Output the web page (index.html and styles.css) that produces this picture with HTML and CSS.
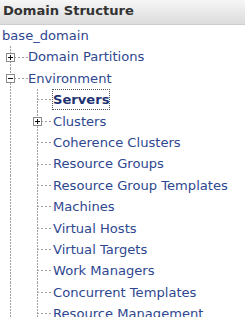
FILE: index.html
```html
<!DOCTYPE html>
<html>
<head>
<meta charset="utf-8">
<link rel="stylesheet" href="styles.css">
</head>
<body>
<div class="panel">
  <div class="header">Domain Structure</div>
  <div class="tree">
    <div class="row root"><a class="link">base_domain</a></div>
    <div class="row">
      <span class="cell c1 tee"><svg class="box" width="9" height="9" viewBox="0 0 9 9"><rect x="0.5" y="0.5" width="8" height="8" fill="#fff" stroke="#8a8a8a"/><path d="M2 4.5H7M4.5 2V7" stroke="#111" stroke-width="1"/></svg></span>
      <a class="link">Domain Partitions</a>
    </div>
    <div class="row">
      <span class="cell c1 tee"><svg class="box" width="9" height="9" viewBox="0 0 9 9"><rect x="0.5" y="0.5" width="8" height="8" fill="#fff" stroke="#8a8a8a"/><path d="M2 4.5H7" stroke="#111" stroke-width="1"/></svg></span>
      <a class="link">Environment</a>
    </div>
    <div class="row">
      <span class="cell c1 line"></span><span class="cell c2 tee"></span>
      <a class="link focus">Servers</a>
    </div>
    <div class="row">
      <span class="cell c1 line"></span><span class="cell c2 tee"><svg class="box" width="9" height="9" viewBox="0 0 9 9"><rect x="0.5" y="0.5" width="8" height="8" fill="#fff" stroke="#8a8a8a"/><path d="M2 4.5H7M4.5 2V7" stroke="#111" stroke-width="1"/></svg></span>
      <a class="link">Clusters</a>
    </div>
    <div class="row"><span class="cell c1 line"></span><span class="cell c2 tee"></span><a class="link">Coherence Clusters</a></div>
    <div class="row"><span class="cell c1 line"></span><span class="cell c2 tee"></span><a class="link">Resource Groups</a></div>
    <div class="row"><span class="cell c1 line"></span><span class="cell c2 tee"></span><a class="link">Resource Group Templates</a></div>
    <div class="row"><span class="cell c1 line"></span><span class="cell c2 tee"></span><a class="link">Machines</a></div>
    <div class="row"><span class="cell c1 line"></span><span class="cell c2 tee"></span><a class="link">Virtual Hosts</a></div>
    <div class="row"><span class="cell c1 line"></span><span class="cell c2 tee"></span><a class="link">Virtual Targets</a></div>
    <div class="row"><span class="cell c1 line"></span><span class="cell c2 tee"></span><a class="link">Work Managers</a></div>
    <div class="row"><span class="cell c1 line"></span><span class="cell c2 tee"></span><a class="link">Concurrent Templates</a></div>
    <div class="row"><span class="cell c1 line"></span><span class="cell c2 tee"></span><a class="link">Resource Management</a></div>
  </div>
</div>
</body>
</html>
```

FILE: styles.css
```css
html, body {
  margin: 0;
  background: #fff;
  overflow: hidden;
}
body {
  font-family: "DejaVu Sans", Verdana, sans-serif;
  font-size: 13.1px;
  --vline: repeating-linear-gradient(to bottom, #a0a0a0 0 2px, transparent 2px 3px);
  --hline: repeating-linear-gradient(to right, #a0a0a0 0 2px, transparent 2px 4px);
}
.header {
  height: 24px;
  line-height: 22px;
  padding-left: 3px;
  font-weight: bold;
  color: #333;
  background: linear-gradient(#f6f6f6, #dcdcdc);
  border-bottom: 1px solid #cdcdcd;
  white-space: nowrap;
}
.row {
  display: flex;
  align-items: center;
  height: 21.4px;
  line-height: 21.4px;
  white-space: nowrap;
}
.root {
  padding-left: 2px;
}
.link {
  color: #2e4790;
  text-decoration: none;
}
.focus {
  font-weight: bold;
  color: #1f3372;
  line-height: 19px;
  outline: 1px dotted #555;
}
.cell {
  flex: none;
  height: 100%;
  display: flex;
  align-items: center;
}
.c1 {
  width: 28px;
  --x: 10px;
}
.c2 {
  width: 25px;
  --x: 9px;
}
.box {
  display: block;
  margin-left: calc(var(--x) - 4px);
}
.line {
  background: var(--vline) var(--x) 0 / 1px 100% no-repeat;
}
.tee {
  background:
    var(--vline) var(--x) 0 / 1px 100% no-repeat,
    var(--hline) var(--x) 50% / 100% 1px no-repeat;
}
```
